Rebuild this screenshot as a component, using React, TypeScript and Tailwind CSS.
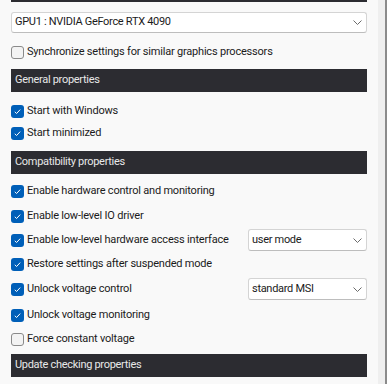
const font = { fontFamily: 'Roboto, "Liberation Sans", Arial, sans-serif' };

function Chevron() {
  return (
    <svg width="9" height="5" viewBox="0 0 9 5" className="text-[#6b6b6b]">
      <path d="M0.5 0.5 L4.5 4.5 L8.5 0.5" fill="none" stroke="currentColor" strokeWidth="1" />
    </svg>
  );
}

function Select({ value, className }: { value: string; className: string }) {
  return (
    <div
      className={`flex items-center justify-between bg-white border border-[#d4d4d4] border-b-[#bdbdbd] rounded-[3px] pl-[3px] pr-[4px] text-[11px] tracking-[-0.3px] text-[#1b1b1b] ${className}`}
    >
      <span>{value}</span>
      <Chevron />
    </div>
  );
}

function Checkbox({ checked }: { checked: boolean }) {
  if (checked) {
    return (
      <div className="w-[13px] h-[13px] rounded-[3px] bg-[#005fb8] flex items-center justify-center shrink-0">
        <svg width="9" height="9" viewBox="0 0 9 9">
          <path d="M1.8 4.8 L3.6 6.5 L7.2 2.6" fill="none" stroke="white" strokeWidth="1" />
        </svg>
      </div>
    );
  }
  return <div className="w-[13px] h-[13px] rounded-[3px] border border-[#8a8a8a] bg-[#f3f3f3] shrink-0" />;
}

function Header({ title, className }: { title: string; className: string }) {
  return (
    <div className={`h-[23px] bg-[#2c2c31] text-[#e8e8e8] text-[11px] tracking-[-0.3px] flex items-center pl-[4px] ${className}`}>
      {title}
    </div>
  );
}

interface Row {
  label: string;
  checked: boolean;
  height: string;
  select?: string;
}

const general: Row[] = [
  { label: "Start with Windows", checked: true, height: "h-[22px]" },
  { label: "Start minimized", checked: true, height: "h-[22px]" },
];

const compat: Row[] = [
  { label: "Enable hardware control and monitoring", checked: true, height: "h-[24px]" },
  { label: "Enable low-level IO driver", checked: true, height: "h-[26px]" },
  { label: "Enable low-level hardware access interface", checked: true, height: "h-[22px]", select: "user mode" },
  { label: "Restore settings after suspended mode", checked: true, height: "h-[26px]" },
  { label: "Unlock voltage control", checked: true, height: "h-[24px]", select: "standard MSI" },
  { label: "Unlock voltage monitoring", checked: true, height: "h-[28px]" },
  { label: "Force constant voltage", checked: false, height: "h-[20px]" },
];

function CheckRow({ row }: { row: Row }) {
  return (
    <div className={`flex items-center ${row.height}`}>
      <Checkbox checked={row.checked} />
      <span className="ml-[3px] text-[11px] tracking-[-0.2px] text-[#1b1b1b] flex-1 whitespace-nowrap">{row.label}</span>
      {row.select && <Select value={row.select} className="w-[119px] h-[22px] shrink-0" />}
    </div>
  );
}

export default function App() {
  return (
    <div className="w-[387px] h-[384px] flex overflow-hidden bg-[#f9f9f9]" style={font}>
      <div className="w-[378px] px-[11px] flex flex-col">
        <div className="h-[2px] bg-[#2c2c31] shrink-0" />
        <Select value="GPU1 : NVIDIA GeForce RTX 4090" className="mt-[10px] h-[21px] shrink-0" />
        <div className="mt-[7px] shrink-0">
          <CheckRow row={{ label: "Synchronize settings for similar graphics processors", checked: false, height: "h-[24px]" }} />
        </div>
        <Header title="General properties" className="mt-[5px] shrink-0" />
        <div className="mt-[8px] shrink-0">
          {general.map((r) => (
            <CheckRow key={r.label} row={r} />
          ))}
        </div>
        <Header title="Compatibility properties" className="mt-[7px] h-[22px] shrink-0" />
        <div className="mt-[5px] shrink-0">
          {compat.map((r) => (
            <CheckRow key={r.label} row={r} />
          ))}
        </div>
        <Header title="Update checking properties" className="mt-[5px] shrink-0" />
      </div>
      <div className="w-[7px] bg-[#efefef]" />
      <div className="w-[2px] bg-[#8b8b8b]" />
    </div>
  );
}
